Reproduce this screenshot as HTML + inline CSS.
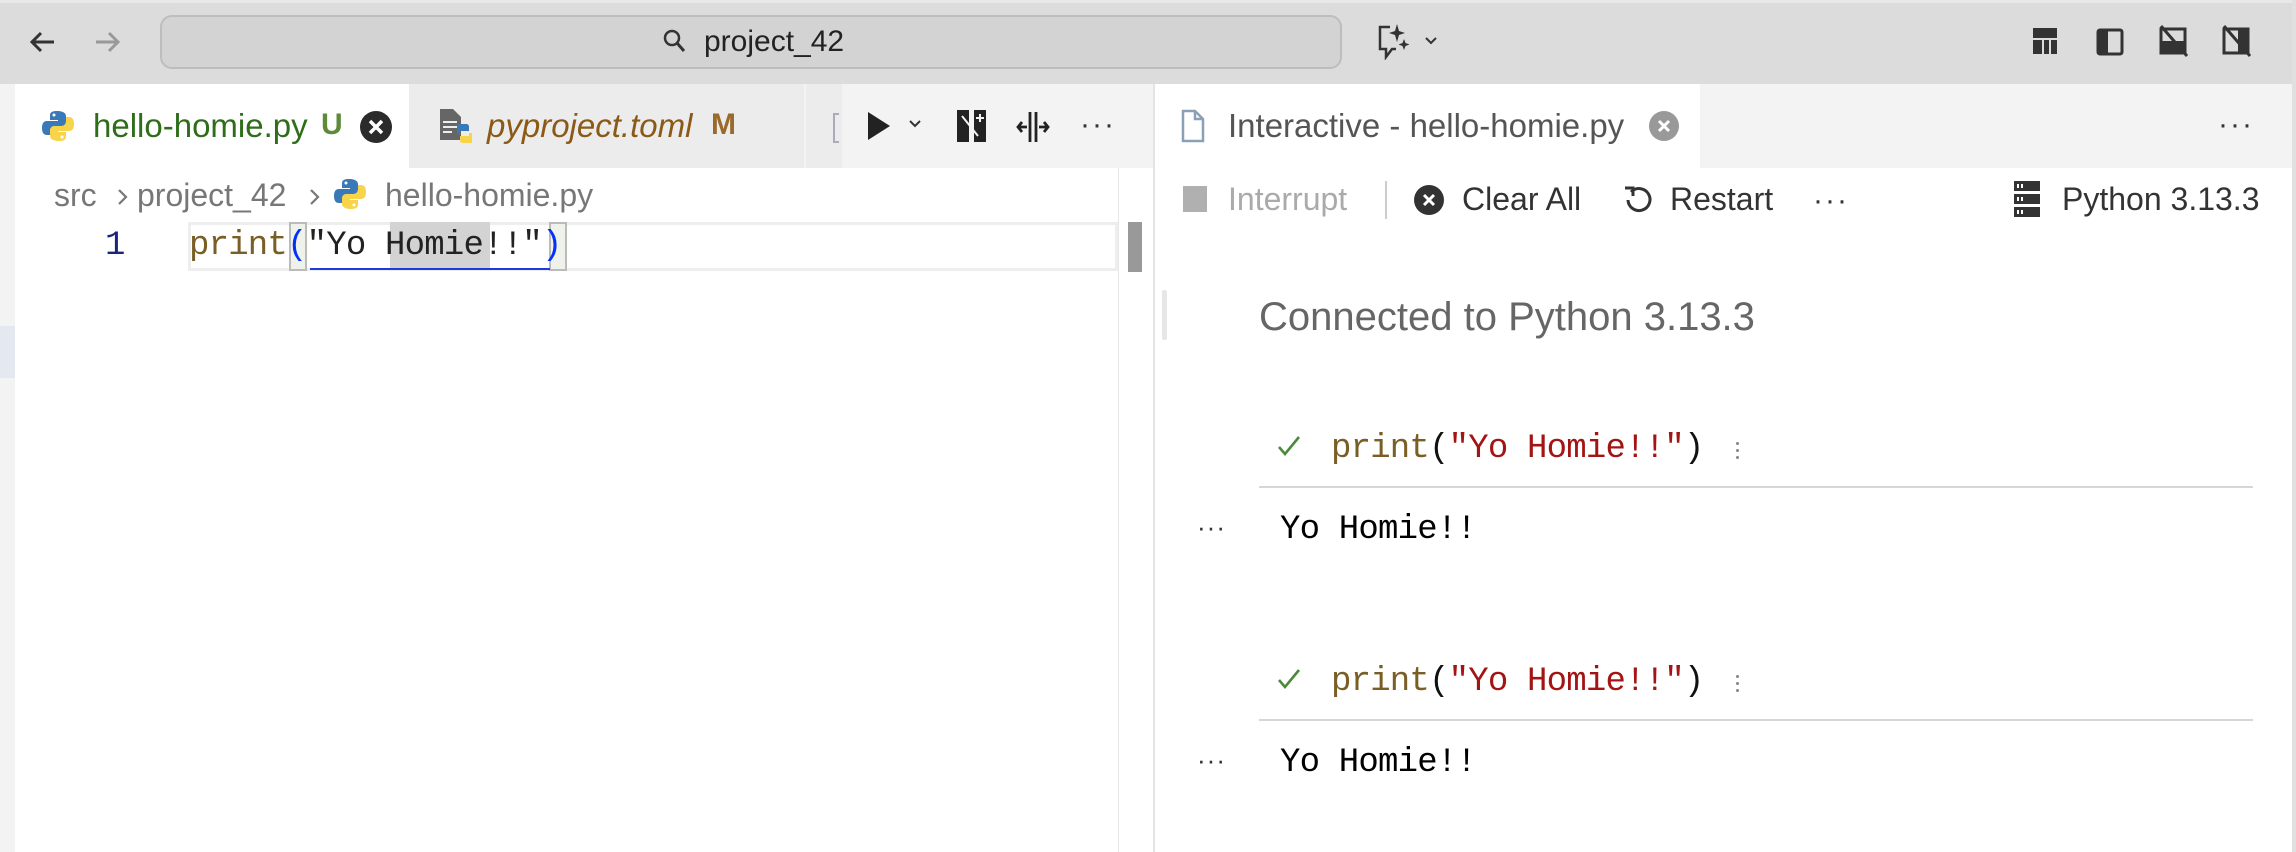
<!DOCTYPE html>
<html><head><meta charset="utf-8"><style>
*{margin:0;padding:0;box-sizing:border-box}
body{width:2296px;height:852px;overflow:hidden;background:#fff;font-family:"Liberation Sans",sans-serif;position:relative}
.a{position:absolute;white-space:nowrap}
.mono{font-family:"Liberation Mono",monospace;font-size:34px;letter-spacing:-0.8px}
</style></head><body>
<!-- title bar -->
<div class="a" style="left:0;top:0;width:2296px;height:84px;background:#dcdcdc;border-top:3px solid #e8e8e8"></div>
<svg class="a" style="left:28px;top:27px" width="30" height="30" viewBox="0 0 30 30"><path d="M26 15H4M13 6l-9 9 9 9" fill="none" stroke="#333" stroke-width="3"/></svg>
<svg class="a" style="left:92px;top:27px" width="30" height="30" viewBox="0 0 30 30"><path d="M4 15h22M17 6l9 9-9 9" fill="none" stroke="#999" stroke-width="3"/></svg>
<div class="a" style="left:160px;top:15px;width:1182px;height:54px;background:#d3d3d3;border:2px solid #bdbdbd;border-radius:12px"></div>
<svg class="a" style="left:662px;top:28px" width="26" height="28" viewBox="0 0 26 28"><circle cx="10" cy="10" r="7" fill="none" stroke="#333" stroke-width="2.5"/><path d="M15 15l7 8" stroke="#333" stroke-width="3"/></svg>
<div class="a" style="left:704px;top:25px;font-size:30px;color:#222">project_42</div>
<svg class="a" style="left:1376px;top:22px" width="40" height="38" viewBox="0 0 40 38"><path d="M14 5H4v22h6v8l6-8h4" fill="none" stroke="#333" stroke-width="2.5"/><path d="M21 2l2 7 6 2-6 2-2 7-2-7-6-2 6-2z M28 17l1.5 4 4 1.5-4 1.5-1.5 4-1.5-4-4-1.5 4-1.5z" fill="#333"/></svg>
<svg class="a" style="left:1424px;top:36px" width="14" height="10" viewBox="0 0 14 10"><path d="M2 2l5 5 5-5" fill="none" stroke="#333" stroke-width="2"/></svg>
<svg class="a" style="left:2033px;top:28px" width="24" height="26"><rect x="0" y="0" width="24" height="26" fill="#333"/><rect x="9" y="12" width="2" height="14" fill="#dcdcdc"/><rect x="0" y="10" width="24" height="2" fill="#dcdcdc"/><rect x="16" y="12" width="2" height="14" fill="#dcdcdc"/></svg>
<svg class="a" style="left:2096px;top:28px" width="28" height="28"><rect x="2" y="2" width="24" height="24" rx="2" fill="none" stroke="#333" stroke-width="3"/><rect x="2" y="2" width="10" height="24" fill="#333"/></svg>
<svg class="a" style="left:2159px;top:24px" width="30" height="34"><rect x="2" y="5" width="24" height="24" fill="none" stroke="#333" stroke-width="3"/><rect x="2" y="17" width="24" height="12" fill="#333"/><path d="M2 2l26 30" stroke="#333" stroke-width="3"/></svg>
<svg class="a" style="left:2222px;top:24px" width="30" height="34"><rect x="2" y="5" width="24" height="24" fill="none" stroke="#333" stroke-width="3"/><rect x="16" y="5" width="10" height="24" fill="#333"/><path d="M2 2l26 30" stroke="#333" stroke-width="3"/></svg>

<!-- left pane -->
<div class="a" style="left:0;top:84px;width:15px;height:768px;background:#f3f3f3"></div>
<div class="a" style="left:0;top:326px;width:15px;height:52px;background:#e4e8f0"></div>
<div class="a" style="left:15px;top:84px;width:1139px;height:84px;background:#f3f3f3"></div>
<div class="a" style="left:15px;top:84px;width:394px;height:84px;background:#fff"></div>
<div class="a" style="left:409px;top:84px;width:395px;height:84px;background:#ececec"></div>
<div class="a" style="left:806px;top:84px;width:36px;height:84px;background:#ececec"></div>
<div class="a" style="left:833px;top:113px;width:6px;height:30px;border:2px solid #aab;border-right:none"></div>
<svg class="a" style="left:42px;top:110px" width="32" height="32" viewBox="0 0 32 32"><path d="M15 1c-7 0-7 3-7 5v4h8v1H5c-3 0-5 2-5 7s2 7 5 7h3v-4c0-3 2-5 5-5h7c2 0 4-2 4-4V6c0-2-2-5-9-5z" fill="#3a78b8"/><circle cx="12" cy="5" r="1.5" fill="#fff"/><path d="M17 31c7 0 7-3 7-5v-4h-8v-1h11c3 0 5-2 5-7s-2-7-5-7h-3v4c0 3-2 5-5 5h-7c-2 0-4 2-4 4v6c0 2 2 5 9 5z" fill="#f7d44a"/><circle cx="20" cy="27" r="1.5" fill="#fff"/></svg>
<div class="a" style="left:93px;top:107px;font-size:33px;color:#2e6e1a">hello-homie.py</div>
<div class="a" style="left:321px;top:108px;font-size:30px;color:#5f8a3a;font-weight:bold">U</div>
<svg class="a" style="left:359px;top:110px" width="34" height="34"><circle cx="17" cy="17" r="16" fill="#2b2b2b"/><path d="M11 11l12 12M23 11L11 23" stroke="#fff" stroke-width="3.5"/></svg>
<svg class="a" style="left:438px;top:108px" width="36" height="36" viewBox="0 0 36 36"><path d="M2 1h13l8 8v23H2z" fill="#666"/><path d="M5 14h14M5 19h14M5 24h9" stroke="#eee" stroke-width="2"/><path d="M20 16h8c2 0 3 1 3 3v4h-9v3h-3v-7c0-2 0-3 1-3z" fill="#3a78b8"/><path d="M33 35h-8c-2 0-3-1-3-3v-4h9v-3h3v7c0 2 0 3-1 3z" fill="#f7d44a"/></svg>
<div class="a" style="left:487px;top:107px;font-size:33px;color:#8a5a16;font-style:italic">pyproject.toml</div>
<div class="a" style="left:711px;top:108px;font-size:30px;color:#9a6a2a;font-weight:bold">M</div>
<svg class="a" style="left:866px;top:110px" width="28" height="32"><path d="M2 2l22 14L2 30z" fill="#222"/></svg>
<svg class="a" style="left:908px;top:119px" width="14" height="10"><path d="M2 2l5 5 5-5" fill="none" stroke="#333" stroke-width="2"/></svg>
<svg class="a" style="left:956px;top:108px" width="32" height="36"><rect x="1" y="2" width="12" height="32" fill="#222"/><rect x="18" y="2" width="12" height="32" fill="#222"/><path d="M6 8l16 20" stroke="#f3f3f3" stroke-width="2"/><path d="M24 6v8M20 10h8" stroke="#f3f3f3" stroke-width="2"/></svg>
<svg class="a" style="left:1016px;top:110px" width="34" height="34"><path d="M14 2v30M20 2v30M2 17h9M23 17h9M6 12l-4 5 4 5M28 12l4 5-4 5" fill="none" stroke="#222" stroke-width="2.8"/></svg>
<div class="a" style="left:1080px;top:108px;font-size:30px;color:#333;letter-spacing:2px">···</div>
<!-- breadcrumb -->
<div class="a" style="left:54px;top:177px;font-size:32px;color:#777">src</div>
<svg class="a" style="left:116px;top:187px" width="14" height="20"><path d="M3 3l7 7-7 7" fill="none" stroke="#777" stroke-width="2.2"/></svg>
<div class="a" style="left:137px;top:177px;font-size:32px;color:#777">project_42</div>
<svg class="a" style="left:308px;top:187px" width="14" height="20"><path d="M3 3l7 7-7 7" fill="none" stroke="#777" stroke-width="2.2"/></svg>
<svg class="a" style="left:334px;top:178px" width="32" height="32" viewBox="0 0 32 32"><path d="M15 1c-7 0-7 3-7 5v4h8v1H5c-3 0-5 2-5 7s2 7 5 7h3v-4c0-3 2-5 5-5h7c2 0 4-2 4-4V6c0-2-2-5-9-5z" fill="#3a78b8"/><circle cx="12" cy="5" r="1.5" fill="#fff"/><path d="M17 31c7 0 7-3 7-5v-4h-8v-1h11c3 0 5-2 5-7s-2-7-5-7h-3v4c0 3-2 5-5 5h-7c-2 0-4 2-4 4v6c0 2 2 5 9 5z" fill="#f7d44a"/><circle cx="20" cy="27" r="1.5" fill="#fff"/></svg>
<div class="a" style="left:385px;top:177px;font-size:32px;color:#777">hello-homie.py</div>
<!-- code -->
<div class="a" style="left:188px;top:222px;width:930px;height:49px;border:3px solid #eeeeee"></div>
<div class="a" style="left:1128px;top:222px;width:14px;height:50px;background:#999"></div>
<div class="a" style="left:1118px;top:168px;width:1px;height:684px;background:#e8e8e8"></div>
<div class="a mono" style="left:105px;top:227px;color:#1a237e">1</div>
<div class="a" style="left:289px;top:222px;width:18px;height:49px;background:#eef2ea;border:2px solid #bbb"></div>
<div class="a" style="left:390px;top:222px;width:100px;height:47px;background:#d3d3d3"></div>
<div class="a" style="left:549px;top:222px;width:18px;height:49px;background:#eef2ea;border:2px solid #bbb"></div>
<div class="a" style="left:310px;top:268px;width:240px;height:2px;background:#1a3be0"></div>
<div class="a mono" style="left:189px;top:227px;color:#222"><span style="color:#795e26">print</span><span style="color:#0431fa">(</span>"Yo Homie!!"<span style="color:#0431fa">)</span></div>

<div class="a" style="left:1153px;top:84px;width:2px;height:768px;background:#e4e4e4"></div>

<!-- right pane -->
<div class="a" style="left:1155px;top:84px;width:1141px;height:84px;background:#f3f3f3"></div>
<div class="a" style="left:1155px;top:84px;width:545px;height:84px;background:#fff"></div>
<svg class="a" style="left:1180px;top:108px" width="26" height="36"><path d="M3 3h12l8 8v22H3z" fill="none" stroke="#8aa0b8" stroke-width="2.5"/><path d="M15 3v8h8" fill="none" stroke="#8aa0b8" stroke-width="2.5"/></svg>
<div class="a" style="left:1228px;top:107px;font-size:33px;color:#555">Interactive - hello-homie.py</div>
<svg class="a" style="left:1648px;top:110px" width="32" height="32"><circle cx="16" cy="16" r="15" fill="#999"/><path d="M11 11l10 10M21 11L11 21" stroke="#fff" stroke-width="3"/></svg>
<div class="a" style="left:2218px;top:108px;font-size:30px;color:#333;letter-spacing:2px">···</div>
<!-- toolbar -->
<div class="a" style="left:1183px;top:186px;width:24px;height:26px;background:#b0b0b0"></div>
<div class="a" style="left:1228px;top:181px;font-size:32px;color:#aaa">Interrupt</div>
<div class="a" style="left:1385px;top:181px;width:2px;height:38px;background:#ccc"></div>
<svg class="a" style="left:1413px;top:184px" width="32" height="32"><circle cx="16" cy="16" r="15" fill="#333"/><path d="M11 11l10 10M21 11L11 21" stroke="#fff" stroke-width="3"/></svg>
<div class="a" style="left:1462px;top:181px;font-size:32px;color:#333">Clear All</div>
<svg class="a" style="left:1622px;top:184px" width="32" height="32"><path d="M9 8a11 11 0 1 1-3 8" fill="none" stroke="#333" stroke-width="3"/><path d="M3 4h8v8" fill="none" stroke="#333" stroke-width="3"/></svg>
<div class="a" style="left:1670px;top:181px;font-size:32px;color:#333">Restart</div>
<div class="a" style="left:1813px;top:184px;font-size:30px;color:#333;letter-spacing:2px">···</div>
<svg class="a" style="left:2013px;top:181px" width="28" height="37"><rect x="1" y="0" width="26" height="10" fill="#333"/><rect x="1" y="13" width="26" height="10" fill="#333"/><rect x="1" y="26" width="26" height="10" fill="#333"/><rect x="4" y="3" width="2" height="4" fill="#fff"/><rect x="8" y="3" width="2" height="4" fill="#fff"/><rect x="4" y="16" width="2" height="4" fill="#fff"/><rect x="8" y="16" width="2" height="4" fill="#fff"/><rect x="4" y="29" width="2" height="4" fill="#fff"/><rect x="8" y="29" width="2" height="4" fill="#fff"/></svg>
<div class="a" style="left:2062px;top:181px;font-size:32px;color:#333">Python 3.13.3</div>

<!-- content -->
<div class="a" style="left:1162px;top:290px;width:5px;height:50px;background:#e6e6e6;border-radius:2px"></div>
<div class="a" style="left:1259px;top:295px;font-size:40px;color:#666">Connected to Python 3.13.3</div>

<svg class="a" style="left:1276px;top:434px" width="26" height="24"><path d="M3 13l6 7L23 3" fill="none" stroke="#4a8a3a" stroke-width="2.6"/></svg>
<div class="a mono" style="left:1331px;top:430px;color:#111"><span style="color:#795e26">print</span>(<span style="color:#a31515">"Yo Homie!!"</span>)</div>
<div class="a" style="left:1736px;top:440px;width:3px;height:20px;background:radial-gradient(circle,#888 1.4px,transparent 1.6px) 0 0/3px 7px"></div>
<div class="a" style="left:1259px;top:486px;width:994px;height:2px;background:#d6d6d6"></div>
<div class="a" style="left:1197px;top:512px;font-size:26px;color:#333;letter-spacing:1px">···</div>
<div class="a mono" style="left:1280px;top:511px;color:#000">Yo Homie!!</div>

<svg class="a" style="left:1276px;top:667px" width="26" height="24"><path d="M3 13l6 7L23 3" fill="none" stroke="#4a8a3a" stroke-width="2.6"/></svg>
<div class="a mono" style="left:1331px;top:663px;color:#111"><span style="color:#795e26">print</span>(<span style="color:#a31515">"Yo Homie!!"</span>)</div>
<div class="a" style="left:1736px;top:673px;width:3px;height:20px;background:radial-gradient(circle,#888 1.4px,transparent 1.6px) 0 0/3px 7px"></div>
<div class="a" style="left:1259px;top:719px;width:994px;height:2px;background:#d6d6d6"></div>
<div class="a" style="left:1197px;top:745px;font-size:26px;color:#333;letter-spacing:1px">···</div>
<div class="a mono" style="left:1280px;top:744px;color:#000">Yo Homie!!</div>
<div class="a" style="left:2292px;top:0;width:4px;height:852px;background:#e0e0e0"></div>
</body></html>
